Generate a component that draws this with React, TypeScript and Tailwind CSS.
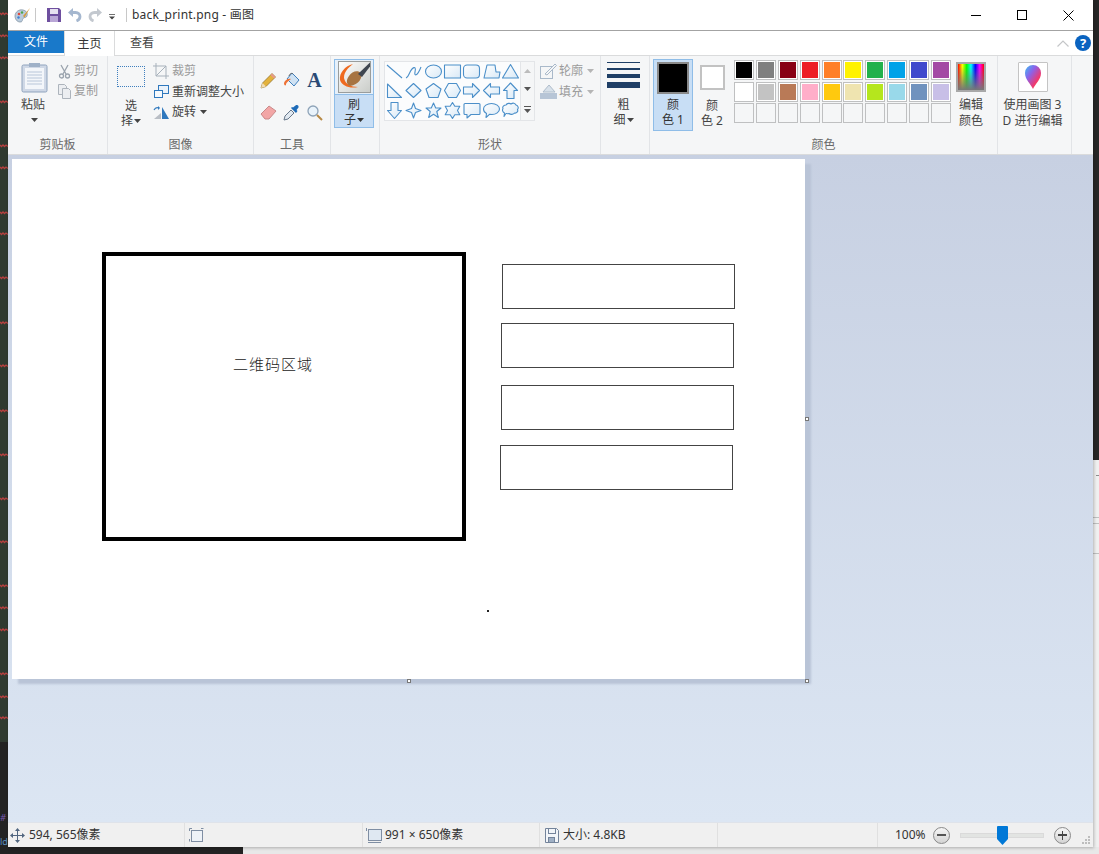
import React from "react";

const squiggleYs = [13, 35, 57, 101, 145, 167, 212, 233, 277, 322, 365, 410, 454, 498, 541, 585, 607, 629, 673, 696, 717];

const row1 = ["bg-[#000000]", "bg-[#7f7f7f]", "bg-[#880015]", "bg-[#ed1c24]", "bg-[#ff7f27]", "bg-[#fff200]", "bg-[#22b14c]", "bg-[#00a2e8]", "bg-[#3f48cc]", "bg-[#a349a4]"];
const row2 = ["bg-[#ffffff]", "bg-[#c3c3c3]", "bg-[#b97a57]", "bg-[#ffaec9]", "bg-[#ffc90e]", "bg-[#efe4b0]", "bg-[#b5e61d]", "bg-[#99d9ea]", "bg-[#7092be]", "bg-[#c8bfe7]"];
const row3 = Array.from({ length: 10 }, () => "bg-[#f5f6f7]");

function Caret({ className = "" }: { className?: string }) {
  return (
    <svg width="7" height="4" viewBox="0 0 7 4" className={className}>
      <path d="M0 0h7L3.5 4z" fill="currentColor" />
    </svg>
  );
}

function Group({ w, label, children }: { w: string; label: string; children: React.ReactNode }) {
  return (
    <div className={`${w} h-full shrink-0 flex flex-col border-r border-[#e2e4e7]`}>
      <div className="h-[81px] flex">{children}</div>
      <div className="h-[16px] text-center text-[12px] leading-[16px] text-[#6a6a6a]">{label}</div>
    </div>
  );
}

function Shape({ children }: { children: React.ReactNode }) {
  return (
    <svg width="19" height="19" viewBox="0 0 19 19" fill="url(#shapeFill)" stroke="#4b8fc9" strokeWidth="1.1" strokeLinejoin="round">
      {children}
    </svg>
  );
}

const shapes: React.ReactNode[] = [
  <path d="M2 3l15 13" fill="none" />,
  <path d="M2 16c3-1 3-6 6-9s4-1 3 3 2 5 6-5" fill="none" />,
  <ellipse cx="9.5" cy="9.5" rx="8" ry="6.5" />,
  <rect x="1.5" y="3" width="16" height="13" />,
  <rect x="1.5" y="3" width="16" height="13" rx="3.5" />,
  <path d="M5 3h8l1 7h4l-1 6H2z" />,
  <path d="M9.5 2.5L17.5 16h-16z" />,
  <path d="M2.5 3L16.5 16.5h-14z" />,
  <path d="M9.5 2.5l7.5 7-7.5 7-7.5-7z" />,
  <path d="M9.5 2.5l7.5 5.5-3 8.5H5L2 8z" />,
  <path d="M5.5 2.5h8l4 7-4 7h-8l-4-7z" />,
  <path d="M1.5 6h9V2.5l7 7-7 7V13h-9z" />,
  <path d="M17.5 6h-9V2.5l-7 7 7 7V13h9z" />,
  <path d="M9.5 2l7 7.5H13v8H6v-8H2.500z" />,
  <path d="M6 1.500h7v8h3.500l-7 8-7-8H6z" />,
  <path d="M9.500 2l2 5.500 5.500 2-5.500 2-2 5.500-2-5.500-5.500-2 5.500-2z" />,
  <path d="M9.500 2l2.200 5h5.300l-4.200 3.500 1.500 6-4.800-3.300-4.800 3.300 1.500-6L2 7h5.300z" />,
  <path d="M9.500 1.500l2.300 3.800h5l-2.300 4.200 2.300 4.200h-5l-2.300 3.800-2.300-3.800h-5l2.300-4.200-2.300-4.200h5z" />,
  <path d="M3 2.500h14a1 1 0 011 1v9a1 1 0 01-1 1H9l-4 3.500v-3.500H3a1 1 0 01-1-1v-9a1 1 0 011-1z" />,
  <path d="M9.500 2.500c4.500 0 8 2.500 8 5.500s-3.500 5.500-7.500 5.500c-1 0-2 0-2.500-.2L4 16.500l.5-4C2.500 11.500 1.500 10 1.500 8c0-3 3.500-5.500 8-5.500z" />,
  <path d="M5 4c1-2 4-2 5-1 2-1.500 4-1 5 1 2 .5 3 3 1.500 4.500 1 2-1 4-3 3.500-1 1.500-4 2-5.500.5-1 .5-2.500 0-3 0L3 15.500l.5-3.500c-2-1-2.500-3-1.500-4.500C1 6 3 4 5 4z" />,
];

function TitleBar() {
  return (
    <div className="h-[31px] shrink-0 bg-white flex items-center border-b border-[#a3a3a3]">
      <div className="w-[6px]" />
      <svg width="17" height="16" viewBox="0 0 17 16" className="shrink-0">
        <path d="M1 9c0-4 4-7 8-6 3 .5 5 3 4 6-.5 2-3 1-4 2.500S9 15 6 15C3 15 1 12 1 9z" fill="#b9cbdc" stroke="#7d8d9c" strokeWidth=".7" />
        <circle cx="5" cy="7" r="1.300" fill="#e24a3b" />
        <circle cx="8" cy="5.500" r="1.200" fill="#4ca64c" />
        <circle cx="4.500" cy="10.500" r="1.200" fill="#3f7fd1" />
        <path d="M16 1L9 9l1.500 1.500z" fill="#d79b3a" />
      </svg>
      <div className="ml-[4px] w-px h-[14px] bg-[#c8c8c8]" />
      <svg width="14" height="14" viewBox="0 0 14 14" className="ml-[11px] shrink-0">
        <path d="M0 0h12l2 2v12H0z" fill="#6e4f9f" />
        <rect x="3" y="1" width="8" height="5" fill="#e6e0f0" />
        <rect x="3" y="8" width="8" height="6" fill="#b9a6d6" />
      </svg>
      <svg width="14" height="14" viewBox="0 0 14 14" className="ml-[7px] shrink-0">
        <path d="M0 4.500L5 0v9z" fill="#a5b7cf" />
        <path d="M4 4.500h3.500c3 0 4.500 2 4.500 4s-1 3.500-3.500 4.500" fill="none" stroke="#a5b7cf" strokeWidth="2.800" />
      </svg>
      <svg width="14" height="14" viewBox="0 0 14 14" className="ml-[6px] shrink-0">
        <path d="M14 4.500L9 0v9z" fill="#c3c8cf" />
        <path d="M10 4.500H6.500c-3 0-4.500 2-4.500 4s1 3.500 3.500 4.500" fill="none" stroke="#c3c8cf" strokeWidth="2.800" />
      </svg>
      <svg width="7" height="7" viewBox="0 0 7 7" className="ml-[7px] mt-[2px] shrink-0 text-[#444]">
        <path d="M0 1h6v.8H0zM0 3.500h6L3 6.500z" fill="currentColor" />
      </svg>
      <div className="ml-[10px] w-px h-[14px] bg-[#c8c8c8]" />
      <div className="ml-[5px] text-[12px] tracking-[0.2px] text-[#333]">back_print.png - 画图</div>
      <div className="ml-auto flex items-center">
        <div className="w-[46px] h-[30px] flex items-center justify-center">
          <div className="w-[10px] h-px bg-black" />
        </div>
        <div className="w-[46px] h-[30px] flex items-center justify-center">
          <div className="w-[10px] h-[10px] border border-black" />
        </div>
        <div className="w-[46px] h-[30px] flex items-center justify-center mr-[2px]">
          <svg width="11" height="11" viewBox="0 0 11 11">
            <path d="M.5.500l10 10M10.500.5l-10 10" stroke="#000" strokeWidth="1" fill="none" />
          </svg>
        </div>
      </div>
    </div>
  );
}

function Tabs() {
  return (
    <div className="h-[25px] shrink-0 bg-white flex text-[12px] border-b border-[#dadbdc] relative">
      <div className="w-[56px] h-[22px] bg-[#1979ca] text-white flex items-center justify-center">文件</div>
      <div className="w-[51px] h-[25px] border-x border-[#dadbdc] text-[#333] flex items-center justify-center bg-white">主页</div>
      <div className="ml-[15px] h-[24px] flex items-center text-[#444]">查看</div>
      <div className="ml-auto flex items-center h-[24px]">
        <svg width="12" height="7" viewBox="0 0 12 7" fill="none" stroke="#c4c6c8" strokeWidth="1.200">
          <path d="M.5 6.500L6 1l5.500 5.500" />
        </svg>
        <div className="ml-[6px] mr-[2px] w-[16px] h-[16px] rounded-full bg-[#0a63c0] text-white text-[13px] font-bold leading-[16px] text-center">?</div>
      </div>
    </div>
  );
}

function Ribbon() {
  return (
    <div className="h-[99px] shrink-0 bg-[#f5f6f7] flex border-b border-[#dadbdc] text-[#444] text-[12px]">
      <Group w="w-[100px]" label="剪贴板">
        <div className="pl-[13px] pt-[6px] w-[50px] flex flex-col items-start">
          <svg width="27" height="31" viewBox="0 0 27 31">
            <rect x="1" y="3" width="25" height="27" rx="1.500" fill="#cfd8e6" stroke="#8fa3bd" />
            <rect x="4" y="6" width="19" height="21" fill="#f3f6fa" />
            <path d="M6 10h15M6 13h15M6 16h15M6 19h15M6 22h15" stroke="#b8c6d9" />
            <rect x="8" y="1" width="11" height="4" fill="#9fb1c8" />
          </svg>
          <div className="mt-[3px] w-[24px] text-center leading-[18px]">粘贴</div>
          <Caret className="ml-[10px] mt-[4px] text-[#444]" />
        </div>
        <div className="pt-[5px] text-[#9b9b9b]">
          <div className="h-[20px] flex items-center gap-[3px]">
            <svg width="13" height="15" viewBox="0 0 13 15" fill="none" stroke="#9aa3ad" strokeWidth="1.300">
              <path d="M3 1l5 9M10 1L5 10" />
              <circle cx="3.500" cy="12" r="2" />
              <circle cx="9.500" cy="12" r="2" />
            </svg>
            <span>剪切</span>
          </div>
          <div className="h-[20px] flex items-center gap-[3px]">
            <svg width="13" height="15" viewBox="0 0 13 15" fill="#eceef1" stroke="#adb4bc">
              <path d="M.5.500h6l2 2v8H.500z" />
              <path d="M4.500 4.500h6l2 2v8h-8z" />
            </svg>
            <span>复制</span>
          </div>
        </div>
      </Group>

      <Group w="w-[146px]" label="图像">
        <div className="pl-[1px] pt-[10px] w-[45px] flex flex-col items-center">
          <div className="w-[28px] h-[21px] border border-dotted border-[#3f7fbe]" />
          <div className="mt-[11px] leading-[15px] w-[36px] text-center">选</div>
          <div className="leading-[15px] flex items-center gap-[1px]">择<Caret /></div>
        </div>
        <div className="pt-[5px]">
          <div className="h-[20px] flex items-center text-[#9b9b9b]">
            <svg width="16" height="16" viewBox="0 0 16 16" fill="none" stroke="#a7b1bb" className="mr-[3px]">
              <path d="M3 0v13h13M0 3h13v13M3 13L13 3" />
            </svg>
            裁剪
          </div>
          <div className="h-[21px] flex items-center">
            <svg width="16" height="15" viewBox="0 0 16 15" fill="#eaf2fa" stroke="#2f78bd" className="mr-[3px]">
              <rect x="5.500" y="1.500" width="10" height="8" />
              <rect x="1.500" y="6.500" width="8" height="7" fill="#f7fafd" />
            </svg>
            <span className="text-[12px]">重新调整大小</span>
          </div>
          <div className="h-[20px] flex items-center">
            <svg width="17" height="15" viewBox="0 0 17 15" className="mr-[2px]">
              <path d="M1 14L8 14 8 8z" fill="#b9bec5" />
              <path d="M9 14h7L9 2z" fill="#2f78bd" />
              <path d="M1 5c1-2 3-3 5-2" fill="none" stroke="#2f78bd" strokeWidth="1.200" />
              <path d="M5 1l2 2-2 2z" fill="#2f78bd" />
            </svg>
            旋转
            <Caret className="ml-[4px]" />
          </div>
        </div>
      </Group>

      <Group w="w-[77px]" label="工具">
        <div className="pl-[3px] pt-[8px] grid grid-cols-3 w-[72px] h-[73px] grid-rows-2 place-items-center">
          <svg width="17" height="17" viewBox="0 0 17 17">
            <path d="M1 16l1.500-5L12 1.500 15.500 5 6 14.500z" fill="#e3b23c" stroke="#8c6d2a" strokeWidth=".7" />
            <path d="M1 16l1.500-5L6 14.500z" fill="#f1dcb4" />
            <path d="M12 1.500L15.500 5 14 6.500 10.500 3z" fill="#e89a8c" />
          </svg>
          <svg width="18" height="18" viewBox="0 0 18 18">
            <path d="M9 2l7 7-5 6-7-7z" fill="#cfe2f3" stroke="#3f7fbe" />
            <path d="M8 8c-3-1-6 1-7 4 0 2 1 3 2 2 0-2 1-3 5-6z" fill="#ee7236" />
            <path d="M6 5c1-3 3-3 4-2" fill="none" stroke="#666" />
          </svg>
          <div className="font-['Liberation_Serif',serif] text-[20px] font-bold text-[#2a4a75] leading-none">A</div>
          <svg width="17" height="15" viewBox="0 0 17 15">
            <path d="M1 9l8-8 7 5-7 8H5z" fill="#f2a6a6" stroke="#c98a8a" />
            <path d="M1 9l3 3.500 1 1.500H5z" fill="#e88" />
          </svg>
          <svg width="17" height="17" viewBox="0 0 17 17">
            <path d="M1 16l1-4 6-6 3 3-6 6z" fill="#e0e8f0" stroke="#67778a" />
            <path d="M8 4l5 5 1.500-2-1-1 2-2.500c.5-2-1-3-3-2L10 3.500 9 3z" fill="#1e6bb8" />
          </svg>
          <svg width="17" height="17" viewBox="0 0 17 17" fill="none">
            <circle cx="7" cy="7" r="5" fill="#e9f3fb" stroke="#8ea3b8" strokeWidth="1.300" />
            <path d="M11 11l5 5" stroke="#b78a45" strokeWidth="2" />
          </svg>
        </div>
      </Group>

      <Group w="w-[49px]" label="">
        <div className="pl-[3px] pt-[3px]">
          <div className="w-[40px] h-[69px] border border-[#8fbde8] flex flex-col">
            <div className="h-[36px] bg-[#e6f0fa] border-b border-[#8fbde8] flex items-center justify-center">
              <svg width="33" height="32" viewBox="0 0 33 32">
                <defs>
                  <linearGradient id="brushTile" x1="0" y1="0" x2="1" y2="1">
                    <stop offset="0" stopColor="#ffffff" />
                    <stop offset="1" stopColor="#c9ccc8" />
                  </linearGradient>
                </defs>
                <rect x=".5" y=".5" width="32" height="31" fill="url(#brushTile)" stroke="#9a9d9c" />
                <path d="M15 3C7 5 1 12 2 19c2 6 10 9 18 7-7 0-13-3-14-9 0-6 4-10 9-14z" fill="#ef6a1f" />
                <path d="M11 15c3-5 9-6 12-3 2 4-2 12-11 13-4-2-4-6-1-10z" fill="#a77442" />
                <path d="M20 13L32 1.500v4L24 16z" fill="#3f4650" />
              </svg>
            </div>
            <div className="flex-1 bg-[#c8def5] flex flex-col items-center text-[#333]">
              <div className="leading-[15px] mt-[2px]">刷</div>
              <div className="leading-[15px] flex items-center gap-[1px]">子<Caret /></div>
            </div>
          </div>
        </div>
      </Group>

      <Group w="w-[221px]" label="形状">
        <div className="pl-[4px] pt-[5px] flex">
          <div className="w-[137px] h-[60px] bg-[#fbfcfd] border border-[#e3e5e8] grid grid-cols-7 grid-rows-3 place-items-center">
            {shapes.map((s, i) => (
              <Shape key={i}>{s}</Shape>
            ))}
          </div>
          <div className="w-[14px] h-[60px] border border-l-0 border-[#e3e5e8] flex flex-col items-center justify-around text-[#555]">
            <Caret className="rotate-180 text-[#bcbcbc]" />
            <Caret />
            <svg width="7" height="7" viewBox="0 0 7 7"><path d="M0 0h7v1H0zM0 3h7L3.500 7z" fill="currentColor" /></svg>
          </div>
        </div>
        <div className="pt-[5px] ml-[5px] text-[#9b9b9b]">
          <div className="h-[20px] flex items-center">
            <svg width="17" height="17" viewBox="0 0 17 17" fill="none" stroke="#a9b9ca" className="mr-[2px]">
              <rect x=".5" y="3.500" width="12" height="12" />
              <path d="M5 11L15 1l1.500 1.500L7 12z" fill="#f5f6f7" />
            </svg>
            轮廓
            <Caret className="ml-[4px] text-[#b5b5b5]" />
          </div>
          <div className="h-[21px] flex items-center">
            <svg width="17" height="16" viewBox="0 0 17 16" className="mr-[2px]">
              <path d="M9 1l6 7H3z" fill="#d8e1ea" stroke="#aebccb" />
              <rect x="0" y="9" width="17" height="6" fill="#b7c5d6" />
            </svg>
            填充
            <Caret className="ml-[4px] text-[#b5b5b5]" />
          </div>
        </div>
      </Group>

      <Group w="w-[49px]" label="">
        <div className="w-full flex flex-col items-center pt-[6px] pr-[3px]">
          <div className="w-[33px] flex flex-col">
            <div className="h-px bg-[#1f3f66]" />
            <div className="h-[2px] mt-[5px] bg-[#1f3f66]" />
            <div className="h-[4px] mt-[4px] bg-[#1f3f66]" />
            <div className="h-[6px] mt-[4px] bg-[#1f3f66]" />
          </div>
          <div className="mt-[9px] leading-[15px]">粗</div>
          <div className="leading-[15px] flex items-center gap-[1px]">细<Caret /></div>
        </div>
      </Group>

      <Group w="w-[348px]" label="颜色">
        <div className="pl-[3px] pt-[3px]">
          <div className="w-[40px] h-[72px] bg-[#c8def5] border border-[#8fbde8] flex flex-col items-center text-[#333]">
            <div className="mt-[2px] w-[32px] h-[32px] bg-black border-2 border-[#8a8a8a]" />
            <div className="mt-[3px] leading-[15px]">颜</div>
            <div className="leading-[15px]">色 1</div>
          </div>
        </div>
        <div className="w-[38px] flex flex-col items-center pt-[9px]">
          <div className="w-[25px] h-[25px] bg-white border-2 border-[#c2c2c2]" />
          <div className="mt-[8px] leading-[15px]">颜</div>
          <div className="leading-[15px]">色 2</div>
        </div>
        <div className="pl-[3px] pt-[4px]">
          <div className="w-[217px] grid grid-cols-10 gap-x-[1.800px] gap-y-[1.500px]">
            {[...row1, ...row2, ...row3].map((c, i) => (
              <div key={i} className={`h-[20px] border border-[#bfc0c1] p-px ${i >= 20 ? "" : "bg-white"}`}>
                <div className={`w-full h-full ${c}`} />
              </div>
            ))}
          </div>
        </div>
        <div className="w-[40px] flex flex-col items-center pt-[6px]">
          <div className="w-[30px] h-[30px] border-2 border-[#a8a8a8] bg-[linear-gradient(to_bottom,rgba(128,128,128,0)_10%,#777777_100%),linear-gradient(to_right,#ff0000,#ffff00,#00ff00,#00ffff,#0000ff,#ff00ff,#ff0000)]" />
          <div className="mt-[5px] leading-[16px]">编辑</div>
          <div className="leading-[16px]">颜色</div>
        </div>
      </Group>

      <Group w="w-[74px]" label="">
        <div className="w-full flex flex-col items-center pt-[6px] pr-[4px]">
          <div className="w-[30px] h-[30px] bg-white border border-[#c4c4c4] rounded-[1px] flex items-center justify-center">
            <svg width="18" height="26" viewBox="0 0 18 26">
              <defs>
                <linearGradient id="p3d" x1="0" y1="0" x2="1" y2="1">
                  <stop offset="0" stopColor="#38c4f2" />
                  <stop offset=".35" stopColor="#8a63ea" />
                  <stop offset=".7" stopColor="#f0386e" />
                  <stop offset="1" stopColor="#f7a01c" />
                </linearGradient>
              </defs>
              <path d="M9 25C7 20 1 16 1 9a8 8 0 0116 0c0 7-6 11-8 16z" fill="url(#p3d)" />
            </svg>
          </div>
          <div className="mt-[5px] leading-[16px] whitespace-nowrap">使用画图 3</div>
          <div className="leading-[16px] whitespace-nowrap">D 进行编辑</div>
        </div>
      </Group>
    </div>
  );
}

function Handle({ className }: { className: string }) {
  return <div className={`absolute w-[4px] h-[4px] bg-white border border-[#777] ${className}`} />;
}

function Canvas() {
  return (
    <div className="flex-1 bg-linear-to-b from-[#c7d0e2] to-[#dce6f3] pl-[4px] pt-[4px]">
      <div className="relative w-[793px] h-[520px] bg-white shadow-[6px_5px_2px_#b9c4d7] font-['Noto_Sans_CJK_SC',sans-serif]">
        <div className="absolute left-[90px] top-[93px] w-[364px] h-[289px] border-[4px] border-black flex justify-center pt-[98px] pr-[22px]">
          <span className="text-[15px] leading-[20px] tracking-[1px] font-light text-[#222] whitespace-nowrap">二维码区域</span>
        </div>
        <div className="absolute left-[490px] top-[105px] w-[233px] h-[45px] border border-[#444]" />
        <div className="absolute left-[489px] top-[164px] w-[233px] h-[45px] border border-[#444]" />
        <div className="absolute left-[489px] top-[226px] w-[233px] h-[45px] border border-[#444]" />
        <div className="absolute left-[488px] top-[286px] w-[233px] h-[45px] border border-[#444]" />
        <div className="absolute left-[475px] top-[451px] w-[2px] h-[2px] bg-[#222]" />
        <Handle className="left-[793px] top-[258px]" />
        <Handle className="left-[793px] top-[520px]" />
        <Handle className="left-[395px] top-[520px]" />
      </div>
    </div>
  );
}

function StatusBar() {
  return (
    <div className="h-[25px] shrink-0 bg-[#f0f0f0] border-t border-[#dfe3ea] flex items-center text-[12px] text-[#333]">
      <div className="w-[177px] h-full flex items-center pl-[2px] border-r border-[#e0e0e0]">
        <svg width="15" height="15" viewBox="0 0 15 15" className="mr-[4px]" fill="#50657f">
          <path d="M7 3h1v9H7zM3 7h9v1H3z" />
          <path d="M7.500 0l2.500 3H5zM7.500 15L5 12h5zM0 7.500L3 5v5zM15 7.500L12 10V5z" />
        </svg>
        594, 565像素
      </div>
      <div className="w-[178px] h-full flex items-center pl-[4px] border-r border-[#e0e0e0]">
        <svg width="15" height="15" viewBox="0 0 15 15" fill="#eef2f7" stroke="#7f8ea3">
          <rect x="2.500" y="2.500" width="11" height="11" />
          <path d="M.5 3V.5H3M.5 11v2.500M12 .5h2.500" fill="none" />
        </svg>
      </div>
      <div className="w-[177px] h-full flex items-center pl-[3px] border-r border-[#e0e0e0]">
        <svg width="16" height="15" viewBox="0 0 16 15" fill="#dfe8f2" stroke="#7f8ea3" className="mr-[3px]">
          <rect x="2.500" y="1.500" width="13" height="11" />
          <path d="M.5 0v3M2 14.500h13" fill="none" />
        </svg>
        991 × 650像素
      </div>
      <div className="w-[178px] h-full flex items-center pl-[5px] border-r border-[#e0e0e0]">
        <svg width="14" height="15" viewBox="0 0 14 15" fill="#f2f5f9" stroke="#73839a" className="mr-[4px]">
          <path d="M.5.500h11l2 2v12H.500z" />
          <rect x="3.500" y=".5" width="7" height="5" />
          <rect x="3.500" y="9.500" width="6" height="5" fill="#9fb0c5" />
        </svg>
        大小: 4.8KB
      </div>
      <div className="w-[160px] h-full border-r border-[#e0e0e0]" />
      <div className="flex-1 h-full flex items-center pl-[17px] relative">
        <span className="w-[31px]">100%</span>
        <div className="ml-[7px] w-[17px] h-[17px] rounded-full border border-[#8a8a8a] bg-linear-to-b from-[#f6f6f6] to-[#d4d4d4] flex items-center justify-center">
          <div className="w-[9px] h-[1.500px] bg-[#555]" />
        </div>
        <div className="ml-[10px] w-[84px] h-[5px] bg-[#e2e4e2] border border-[#dadada] relative">
          <svg width="11" height="19" viewBox="0 0 11 19" className="absolute left-[36px] top-[-8px]">
            <path d="M1 0h9a1 1 0 011 1v12l-5.500 6L0 13V1a1 1 0 011-1z" fill="#0078d7" />
          </svg>
        </div>
        <div className="ml-[10px] w-[17px] h-[17px] rounded-full border border-[#8a8a8a] bg-linear-to-b from-[#f6f6f6] to-[#d4d4d4] flex items-center justify-center relative">
          <div className="w-[9px] h-[1.500px] bg-[#444]" />
          <div className="absolute w-[1.500px] h-[9px] bg-[#444]" />
        </div>
        <svg width="9" height="9" viewBox="0 0 9 9" className="absolute right-[2px] bottom-[2px]" fill="#bdbdbd">
          <path d="M6 0h2v2H6zM3 3h2v2H3zM6 3h2v2H6zM0 6h2v2H0zM3 6h2v2H3zM6 6h2v2H6z" />
        </svg>
      </div>
    </div>
  );
}

export default function App() {
  return (
    <div className="relative w-[1099px] h-[854px] overflow-hidden bg-[#f0f0f0] font-['Noto_Sans','Noto_Sans_CJK_SC',sans-serif]">
      {/* desktop behind the window */}
      <div className="absolute left-0 top-0 w-[8px] h-[742px] bg-[#2f3a30]">
        <svg width="8" height="742" viewBox="0 0 8 742">
          {squiggleYs.map((y) => (
            <path key={y} d={`M0 ${y}l1.500 1.500 1.500-1.500 1.500 1.500 1.500-1.500 2 1.500`} fill="none" stroke="#b5403f" strokeWidth="1.300" />
          ))}
        </svg>
      </div>
      <div className="absolute left-0 top-[742px] w-[8px] h-[112px] bg-[#232323] text-[9px] leading-[24px]">
        <div className="mt-[64px] italic text-[#7a5ab0]">#</div>
        <div className="text-[#5a8fc0]">ld</div>
      </div>
      <div className="absolute left-[8px] top-[847px] w-[235px] h-[7px] bg-[#232323]" />
      <div className="absolute left-[243px] top-[847px] right-0 h-[7px] bg-[#e8e8e8]" />
      <div className="absolute right-0 top-0 w-[7px] h-[460px] bg-[#262626]" />
      <div className="absolute right-0 top-[475px] w-[3px] h-px bg-[#8d8d8d]" />
      <div className="absolute right-0 top-[517px] w-[6px] h-px bg-[#c0c0c0]" />
      <div className="absolute right-0 top-[523px] w-[6px] h-px bg-[#c0c0c0]" />
      <div className="absolute right-0 top-[553px] w-[6px] h-px bg-[#c0c0c0]" />

      {/* Paint window */}
      <svg width="0" height="0" className="absolute">
        <defs>
          <linearGradient id="shapeFill" x1="0" y1="0" x2="1" y2="1">
            <stop offset="0" stopColor="#ffffff" />
            <stop offset="1" stopColor="#d9e9f6" />
          </linearGradient>
        </defs>
      </svg>
      <div className="absolute left-[8px] top-0 w-[1085px] h-[847px] flex flex-col shadow-[1px_1px_3px_rgba(0,0,0,0.25)]">
        <TitleBar />
        <Tabs />
        <Ribbon />
        <Canvas />
        <StatusBar />
      </div>
    </div>
  );
}
